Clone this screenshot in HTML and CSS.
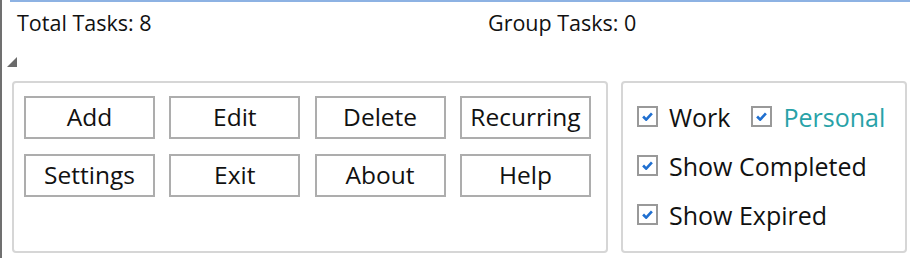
FILE: index.html
```html
<!DOCTYPE html>
<html lang="en">
<head>
  <meta charset="UTF-8" />
  <title>Tasks</title>
  <link rel="stylesheet" href="styles.css">
</head>
<body>
  <div class="app">
    <div class="topline"></div>

    <!-- counters -->
    <div class="stats">
      <span>Total Tasks: 8</span>
      <span>Group Tasks: 0</span>
    </div>

    <div class="grip"></div>

    <div class="panels">
      <!-- command buttons -->
      <div class="box buttons">
        <button class="btn">Add</button>
        <button class="btn">Edit</button>
        <button class="btn">Delete</button>
        <button class="btn">Recurring</button>
        <button class="btn">Settings</button>
        <button class="btn">Exit</button>
        <button class="btn">About</button>
        <button class="btn">Help</button>
      </div>

      <!-- filters -->
      <div class="box filters">
        <div class="row">
          <label class="check">
            <span class="tick"><svg viewBox="0 0 10 8"><path d="M1 4 L3.8 6.8 L9 1.2" /></svg></span>
            Work
          </label>
          <label class="check personal">
            <span class="tick"><svg viewBox="0 0 10 8"><path d="M1 4 L3.8 6.8 L9 1.2" /></svg></span>
            Personal
          </label>
        </div>
        <div class="row">
          <label class="check">
            <span class="tick"><svg viewBox="0 0 10 8"><path d="M1 4 L3.8 6.8 L9 1.2" /></svg></span>
            Show Completed
          </label>
        </div>
        <div class="row">
          <label class="check">
            <span class="tick"><svg viewBox="0 0 10 8"><path d="M1 4 L3.8 6.8 L9 1.2" /></svg></span>
            Show Expired
          </label>
        </div>
      </div>
    </div>
  </div>
</body>
</html>
```

FILE: styles.css
```css
:root {
  --text: #111111;
  --frame: #707070;
  --accent: #8db2e3;
  --box-line: #d6d6d6;
  --btn-line: #adadad;
  --teal: #28a2a8;
  --check: #1f6fd0;
}

* {
  margin: 0;
  padding: 0;
  box-sizing: border-box;
}

html,
body {
  width: 100%;
  height: 100%;
  overflow: hidden;
  background: #ffffff;
  color: var(--text);
  font-family: 'Open Sans', 'Noto Sans', sans-serif;
}

.app {
  height: 258px;
  border-left: 2px solid var(--frame);
}

.topline {
  height: 2px;
  margin: 0 4px 0 8px;
  background: var(--accent);
}

.stats {
  display: grid;
  grid-template-columns: 471px auto;
  padding: 8px 0 0 15px;
  height: 46px;
  font-size: 21.5px;
  line-height: 26px;
}

.grip {
  width: 0;
  height: 0;
  margin: 9px 0 0 5px;
  border-left: 10px solid transparent;
  border-bottom: 10px solid #6b6b6b;
}

.panels {
  display: flex;
  gap: 13px;
  margin: 14px 0 0 10px;
  height: 172px;
}

.box {
  border: 2px solid var(--box-line);
  border-radius: 4px;
}

.buttons {
  width: 596px;
  display: grid;
  grid-template-columns: repeat(4, 131px);
  grid-template-rows: 43px 43px;
  column-gap: 14.3px;
  row-gap: 15px;
  align-content: start;
  padding: 13px 10px;
}

.btn {
  background: #ffffff;
  border: 2px solid var(--btn-line);
  font-family: inherit;
  font-size: 24.5px;
  color: var(--text);
  line-height: 1;
}

.filters {
  width: 286px;
  padding: 9px 0 0 14px;
}

.row {
  display: flex;
  align-items: center;
  gap: 21px;
  height: 49px;
}

.check {
  display: flex;
  align-items: center;
  gap: 11px;
  font-size: 25px;
}

.check.personal {
  color: var(--teal);
}

.tick {
  width: 21px;
  height: 21px;
  border: 2px solid #999999;
  display: flex;
  align-items: center;
  justify-content: center;
  background: #ffffff;
}

.tick svg {
  width: 11px;
  height: 9px;
  fill: none;
  stroke: var(--check);
  stroke-width: 2.4;
}
```
